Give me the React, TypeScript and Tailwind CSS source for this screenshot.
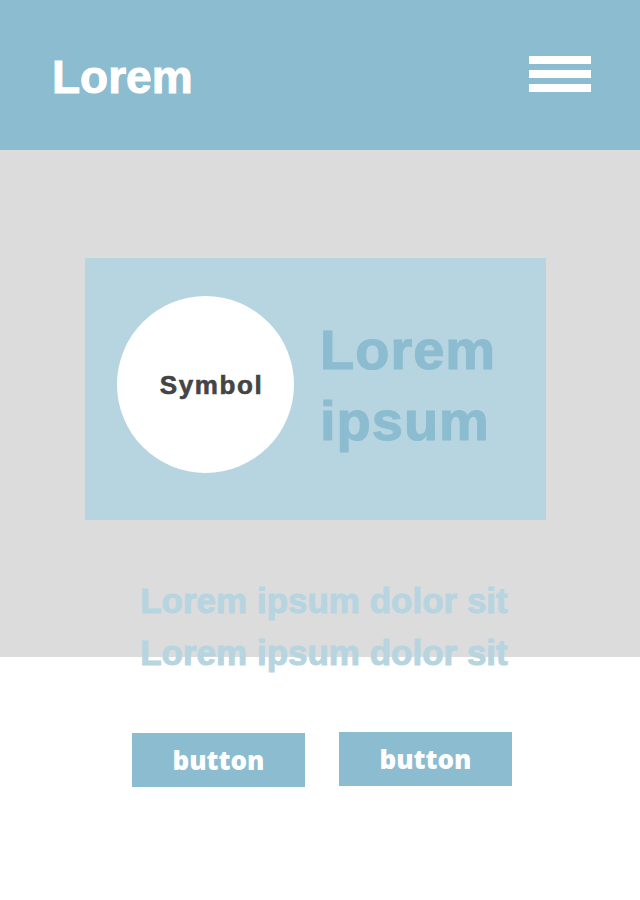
import React from "react";

const Header = () => (
  <header className="h-[150px] bg-[#8cbcd0] flex items-center justify-between pl-[52px] pr-[49px]">
    <h1 className="text-[46px] leading-none font-bold text-white mt-[3px] [-webkit-text-stroke:1px_currentColor] font-['Liberation_Sans',Arial,sans-serif]">
      Lorem
    </h1>
    <button className="flex flex-col gap-[6px] -mt-[3px]" aria-label="menu">
      <span className="block w-[62px] h-[8px] bg-white" />
      <span className="block w-[62px] h-[8px] bg-white" />
      <span className="block w-[62px] h-[8px] bg-white" />
    </button>
  </header>
);

const App = () => {
  return (
    <div className="w-[640px] min-h-[900px] bg-white font-['Liberation_Sans',Arial,sans-serif]">
      <Header />

      <section className="h-[507px] bg-[#dcdcdc] pt-[108px]">
        <div className="ml-[85px] w-[461px] h-[262px] bg-[#b7d5e0] flex items-center pl-[32px]">
          <div className="w-[177px] h-[177px] -mt-[9px] rounded-full bg-white flex items-center justify-center shrink-0">
            <span className="text-[26px] font-bold text-[#444444] tracking-[1.6px] ml-[12px] mt-[2px] [-webkit-text-stroke:0.6px_currentColor]">
              Symbol
            </span>
          </div>
          <p className="ml-[26px] -mt-[8px] text-[56px] leading-[71px] font-bold text-[#8cbcd0] tracking-[1px] [-webkit-text-stroke:1.2px_currentColor]">
            Lorem
            <br />
            ipsum
          </p>
        </div>

        <p className="mt-[55px] text-center text-[35px] leading-[52px] font-bold text-[#b7d5e0] ml-[8px] [-webkit-text-stroke:1px_currentColor]">
          Lorem ipsum dolor sit
          <br />
          Lorem ipsum dolor sit
        </p>
      </section>

      <div className="flex justify-center gap-[34px] mt-[76px] ml-[4px]">
        <button className="w-[173px] h-[54px] bg-[#8cbcd0] text-white text-[26px] font-extrabold font-['Open_Sans',sans-serif]">
          button
        </button>
        <button className="w-[173px] h-[54px] bg-[#8cbcd0] text-white text-[26px] font-extrabold font-['Open_Sans',sans-serif] -mt-px">
          button
        </button>
      </div>
    </div>
  );
};

export default App;
